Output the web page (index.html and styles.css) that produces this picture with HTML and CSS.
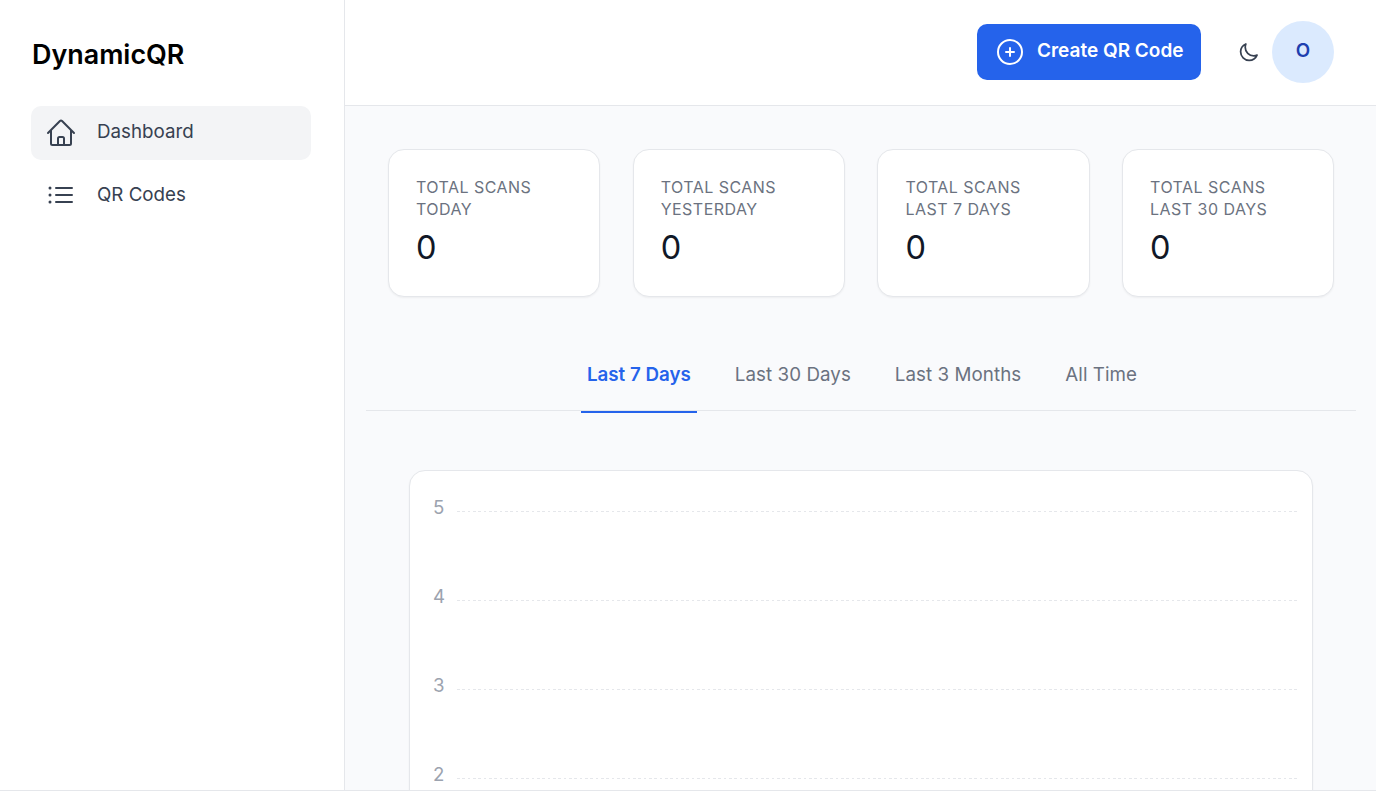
FILE: index.html
```html
<!DOCTYPE html>
<html lang="en">
<head>
<meta charset="utf-8">
<title>DynamicQR</title>
<link rel="stylesheet" href="styles.css">
</head>
<body>
<div class="app">
  <aside class="sidebar">
    <div class="logo">DynamicQR</div>
    <nav class="nav">
      <a class="nav-item active">
        <svg class="nav-icon" viewBox="0 0 24 24" fill="none" stroke="currentColor" stroke-width="1.5" stroke-linecap="round" stroke-linejoin="round"><path d="m2.25 12 8.954-8.955c.44-.439 1.152-.439 1.591 0L21.75 12M4.5 9.75v10.125c0 .621.504 1.125 1.125 1.125H9.75v-4.875c0-.621.504-1.125 1.125-1.125h2.25c.621 0 1.125.504 1.125 1.125V21h4.125c.621 0 1.125-.504 1.125-1.125V9.75M8.25 21h8.25"/></svg>
        <span class="nav-text">Dashboard</span>
      </a>
      <a class="nav-item">
        <svg class="nav-icon" viewBox="0 0 24 24" fill="none" stroke="currentColor" stroke-width="1.5" stroke-linecap="round" stroke-linejoin="round"><path d="M8.25 6.75h12M8.25 12h12m-12 5.25h12M3.75 6.75h.007v.008H3.75V6.75Zm.375 0a.375.375 0 1 1-.75 0 .375.375 0 0 1 .75 0ZM3.75 12h.007v.008H3.75V12Zm.375 0a.375.375 0 1 1-.75 0 .375.375 0 0 1 .75 0Zm-.375 5.25h.007v.008H3.75v-.008Zm.375 0a.375.375 0 1 1-.75 0 .375.375 0 0 1 .75 0Z"/></svg>
        <span class="nav-text nav-text-second">QR Codes</span>
      </a>
    </nav>
  </aside>
  <div class="main">
    <header class="topbar">
      <button class="create-btn">
        <svg class="create-icon" viewBox="0 0 24 24" fill="none" stroke="currentColor" stroke-width="1.5" stroke-linecap="round" stroke-linejoin="round"><path d="M12 9v6m3-3H9m12 0a9 9 0 1 1-18 0 9 9 0 0 1 18 0Z"/></svg>
        <span class="create-text">Create QR Code</span>
      </button>
      <svg class="moon" viewBox="0 0 24 24" fill="none" stroke="currentColor" stroke-width="2" stroke-linecap="round" stroke-linejoin="round"><path d="M21.752 15.002A9.72 9.72 0 0 1 18 15.75c-5.385 0-9.75-4.365-9.75-9.75 0-1.33.266-2.597.748-3.752A9.753 9.753 0 0 0 3 11.25C3 16.635 7.365 21 12.75 21a9.753 9.753 0 0 0 9.002-5.998Z"/></svg>
      <div class="avatar">O</div>
    </header>
    <main class="content">
      <section class="stats">
        <div class="card"><div class="card-label">Total Scans<br>Today</div><div class="card-value">0</div></div>
        <div class="card"><div class="card-label">Total Scans<br>Yesterday</div><div class="card-value">0</div></div>
        <div class="card"><div class="card-label">Total Scans<br>Last 7 Days</div><div class="card-value">0</div></div>
        <div class="card"><div class="card-label">Total Scans<br>Last 30 Days</div><div class="card-value">0</div></div>
      </section>
      <div class="tabs">
        <a class="tab active">Last 7 Days</a>
        <a class="tab">Last 30 Days</a>
        <a class="tab">Last 3 Months</a>
        <a class="tab">All Time</a>
      </div>
      <section class="chart">
        <div class="chart-row"><span class="tick">5</span><span class="gridline"></span></div>
        <div class="chart-row"><span class="tick">4</span><span class="gridline"></span></div>
        <div class="chart-row"><span class="tick">3</span><span class="gridline"></span></div>
        <div class="chart-row"><span class="tick">2</span><span class="gridline"></span></div>
      </section>
    </main>
  </div>
</div>
</body>
</html>
```
FILE: styles.css
```css
* { box-sizing: border-box; }
html, body { margin: 0; height: 100%; overflow: hidden; }
body { font-family: Inter, "Liberation Sans", sans-serif; background: #fff; color: #111827; }
.app { display: flex; height: 791px; border-bottom: 1px solid #e5e7eb; overflow: hidden; }
.sidebar { flex: 0 0 345px; border-right: 1px solid #e5e7eb; background: #fff; padding: 0 33px 0 31px; }
.logo { font-size: 26.9px; font-weight: 600; color: #000; line-height: 32px; padding: 38px 0 0 1px; height: 106px; }
.nav { display: flex; flex-direction: column; gap: 8px; }
.nav-item { display: flex; align-items: center; gap: 20px; height: 54px; padding-left: 14px; border-radius: 10px; font-size: 18.75px; color: #374151; }
.nav-text { margin-bottom: 4px; }
.nav-text-second { margin-bottom: 2px; }
.nav-item.active { background: #f3f4f6; }
.nav-icon { width: 32px; height: 32px; flex: none; }
.main { flex: 1; min-width: 0; display: flex; flex-direction: column; background: #f9fafc; }
.topbar { flex: 0 0 106px; display: flex; align-items: center; justify-content: flex-end; background: #fff; border-bottom: 1px solid #e5e7eb; padding: 0 42px 2px 0; }
.create-btn { display: flex; align-items: center; gap: 11px; width: 224px; height: 56px; padding: 0 0 0 17px; border: 0; border-radius: 10px; background: #2563eb; color: #fff; font: 600 19px Inter, "Liberation Sans", sans-serif; }
.create-text { margin-bottom: 2px; }
.create-icon { width: 32px; height: 32px; flex: none; }
.moon { width: 21px; height: 21px; margin: 2px 13px 0 37px; color: #374151; }
.avatar { width: 62px; height: 62px; padding-bottom: 2px; border-radius: 50%; background: #dbeafe; color: #1e40af; font-size: 18.75px; font-weight: 600; display: flex; align-items: center; justify-content: center; }
.content { flex: 1; min-height: 0; padding: 43px 20px 0 21px; }
.stats { display: grid; grid-template-columns: repeat(4, 212.4px); gap: 32.3px; padding: 0 0 0 22px; }
.card { height: 148px; padding: 26px 27px 0 27px; background: #fff; border: 1px solid #e5e7eb; border-radius: 16px; box-shadow: 0 1px 2px rgba(0,0,0,.05); }
.card-label { font-size: 16px; line-height: 22px; letter-spacing: .47px; text-transform: uppercase; color: #6b7280; }
.card-value { font-size: 32.5px; line-height: 40px; color: #111827; margin-top: 8px; }
.tabs { display: flex; justify-content: center; gap: 32px; height: 65px; margin-top: 49px; padding-left: 2px; border-bottom: 1px solid #e5e7eb; }
.tab { height: 67px; padding: 15px 6px 0; font-size: 18.75px; line-height: 28px; letter-spacing: .06px; color: #6b7280; }
.tab.active { color: #2563eb; font-weight: 600; letter-spacing: 0; border-bottom: 2px solid #2563eb; }
.chart { margin: 59px 43px 0; padding: 25px 15px 0 0; height: 340px; background: #fff; border: 1px solid #e5e7eb; border-radius: 16px; box-shadow: 0 1px 2px rgba(0,0,0,.05); }
.chart-row { display: flex; align-items: flex-start; height: 89px; }
.tick { flex: 0 0 47px; padding-left: 23px; font-size: 18.67px; line-height: 24px; color: #9ca3af; }
.gridline { flex: 1; height: 1px; margin-top: 15px; background: repeating-linear-gradient(90deg, #e5e7eb 0 2.667px, transparent 2.667px 5.333px); }
```
